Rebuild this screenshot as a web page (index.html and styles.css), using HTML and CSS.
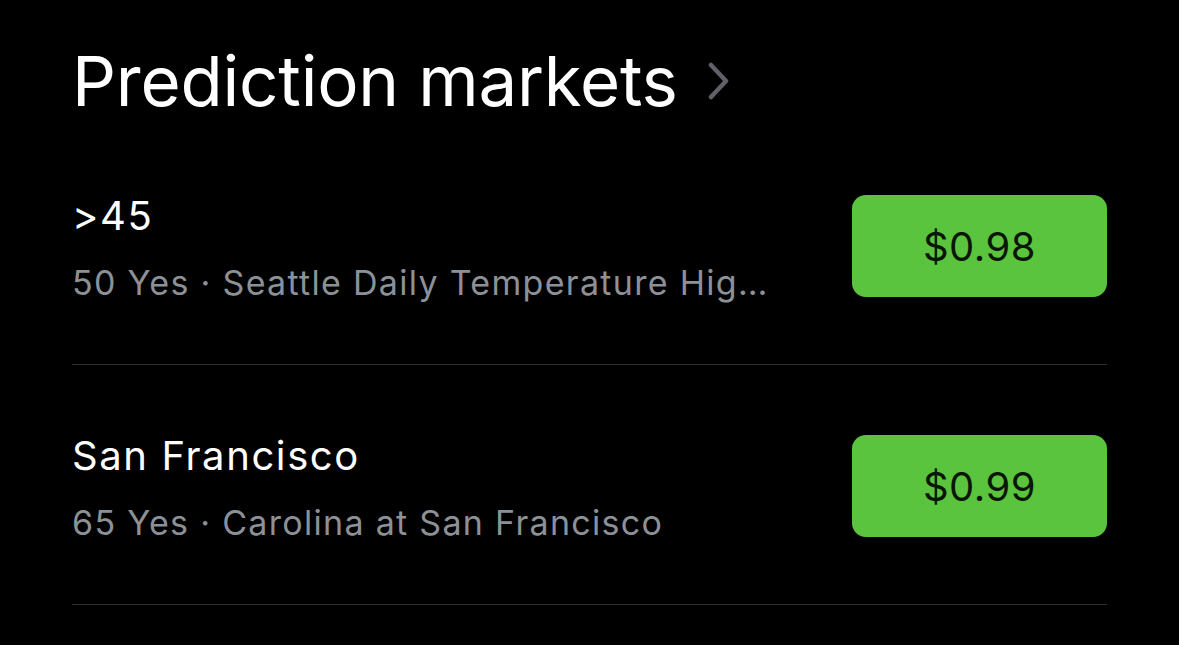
FILE: index.html
```html
<!DOCTYPE html>
<html lang="en">
<head>
  <meta charset="UTF-8" />
  <meta name="viewport" content="width=device-width, initial-scale=1.0"/>
  <title>Prediction markets</title>
  <link rel="stylesheet" href="styles.css">
</head>
<body>
  <div class="section">
    <h2 class="section-title">
      Prediction markets
      <svg class="chevron" width="22" height="38" viewBox="0 0 22 38">
        <path d="M3 3 L18 19 L3 35" fill="none" stroke="#5e6166" stroke-width="4.5" stroke-linecap="round" stroke-linejoin="round"/>
      </svg>
    </h2>

    <div class="market">
      <div class="market-info">
        <div class="market-name">&gt;45</div>
        <div class="market-meta">50 Yes · Seattle Daily Temperature High on Nov 9</div>
      </div>
      <button class="price">$0.98</button>
    </div>

    <div class="market">
      <div class="market-info">
        <div class="market-name">San Francisco</div>
        <div class="market-meta">65 Yes · Carolina at San Francisco</div>
      </div>
      <button class="price">$0.99</button>
    </div>
  </div>
</body>
</html>
```

FILE: styles.css
```css
body {
  font-family: Inter, 'Noto Sans', sans-serif;
  background: #000;
  color: #fff;
  margin: 0;
  padding: 0;
}
.section {
  padding: 0 72px;
}
.section-title {
  display: flex;
  align-items: center;
  gap: 30px;
  margin: 0;
  padding-top: 38px;
  height: 87px;
  font-size: 69px;
  font-weight: 400;
  letter-spacing: -0.2px;
  line-height: 87px;
}
.chevron {
  margin-top: -2px;
}
.market {
  display: flex;
  align-items: flex-start;
  justify-content: space-between;
  padding: 70px 0 67px;
  border-bottom: 1px solid #2c2d33;
}
.market-info {
  min-width: 0;
  max-width: 704px;
  margin: 1px 0 -7px;
}
.market-name {
  font-size: 40px;
  line-height: 40px;
  letter-spacing: 1.6px;
  margin-bottom: 27px;
}
.market-meta {
  font-size: 34px;
  line-height: 40px;
  letter-spacing: 1.3px;
  color: #8c9197;
  white-space: nowrap;
  overflow: hidden;
  text-overflow: ellipsis;
}
.price {
  width: 255px;
  height: 102px;
  background: #5bc43e;
  color: #0a1606;
  border: none;
  border-radius: 14px;
  font-family: inherit;
  font-size: 40px;
  letter-spacing: 0.5px;
  cursor: pointer;
}
```
